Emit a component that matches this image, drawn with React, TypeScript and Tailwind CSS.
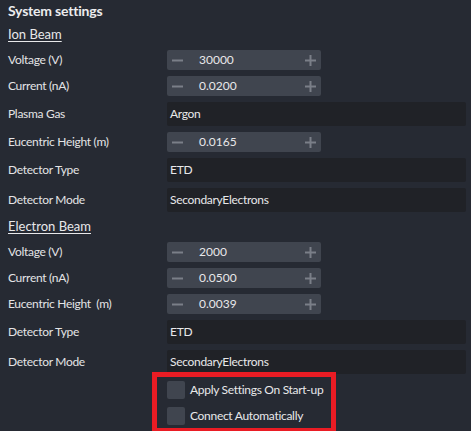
import React from "react";

const font = { fontFamily: 'Lato, "Noto Sans", sans-serif' };

function Minus() {
  return (
    <svg width="11" height="11" viewBox="0 0 11 11">
      <rect x="0" y="4.5" width="11" height="2" fill="#7a7f88" />
    </svg>
  );
}
function Plus() {
  return (
    <svg width="11" height="11" viewBox="0 0 11 11">
      <rect x="0" y="4.5" width="11" height="2" fill="#7a7f88" />
      <rect x="4.5" y="0" width="2" height="11" fill="#7a7f88" />
    </svg>
  );
}

function Spin({ label, value }: { label: string; value: string }) {
  return (
    <div className="flex items-center h-[20px]">
      <div className="w-[159px] text-[12px] tracking-[-0.3px] text-[#e4e4e6] whitespace-pre">{label}</div>
      <div className="w-[154px] h-[20px] bg-[#40454f] rounded-[2px] flex items-center pl-[5px] pr-[5px]">
        <Minus />
        <span className="ml-[16px] text-[12px] text-[#e8e8ea] flex-1">{value}</span>
        <Plus />
      </div>
    </div>
  );
}

function Field({ label, value }: { label: string; value: string }) {
  return (
    <div className="flex items-center h-[24px]">
      <div className="w-[159px] text-[12px] tracking-[-0.3px] text-[#e4e4e6]">{label}</div>
      <div className="w-[299px] h-[24px] bg-[#202227] rounded-[2px] flex items-center pl-[3px] text-[12px] tracking-[-0.3px] text-[#e8e8ea]">
        {value}
      </div>
    </div>
  );
}

function Heading({ text }: { text: string }) {
  return (
    <div className="h-[18px] flex items-center text-[13px] text-[#e8e8ea] underline underline-offset-[2px]">
      {text}
    </div>
  );
}

function Check({ label }: { label: string }) {
  return (
    <div className="flex items-center h-[18px] pl-[159px]">
      <div className="w-[18px] h-[18px] rounded-[2px] bg-[#40454f]" />
      <span className="ml-[5px] text-[12px] tracking-[-0.3px] text-[#e8e8ea]">{label}</span>
    </div>
  );
}

export default function App() {
  return (
    <div className="relative w-[471px] h-[431px] overflow-hidden bg-[#262a33]" style={font}>
      <div className="flex flex-col gap-[6px] pl-[8px] pt-[1px]">
        <div className="h-[19px] flex items-center text-[14px] font-bold tracking-[-0.2px] text-[#ececee]">System settings</div>
        <Heading text="Ion Beam" />
        <Spin label="Voltage (V)" value="30000" />
        <Spin label="Current (nA)" value="0.0200" />
        <Field label="Plasma Gas" value="Argon" />
        <Spin label="Eucentric Height (m)" value="0.0165" />
        <Field label="Detector Type" value="ETD" />
        <Field label="Detector Mode" value="SecondaryElectrons" />
        <Heading text="Electron Beam" />
        <Spin label="Voltage (V)" value="2000" />
        <Spin label="Current (nA)" value="0.0500" />
        <Spin label="Eucentric Height  (m)" value="0.0039" />
        <Field label="Detector Type" value="ETD" />
        <Field label="Detector Mode" value="SecondaryElectrons" />
        <div className="flex flex-col gap-[8px] pt-[1px]">
          <Check label="Apply Settings On Start-up" />
          <Check label="Connect Automatically" />
        </div>
      </div>
      <div className="absolute left-[152px] top-[372px] w-[184px] h-[61px] border-[5px] border-[#ea1c24]" />
    </div>
  );
}
